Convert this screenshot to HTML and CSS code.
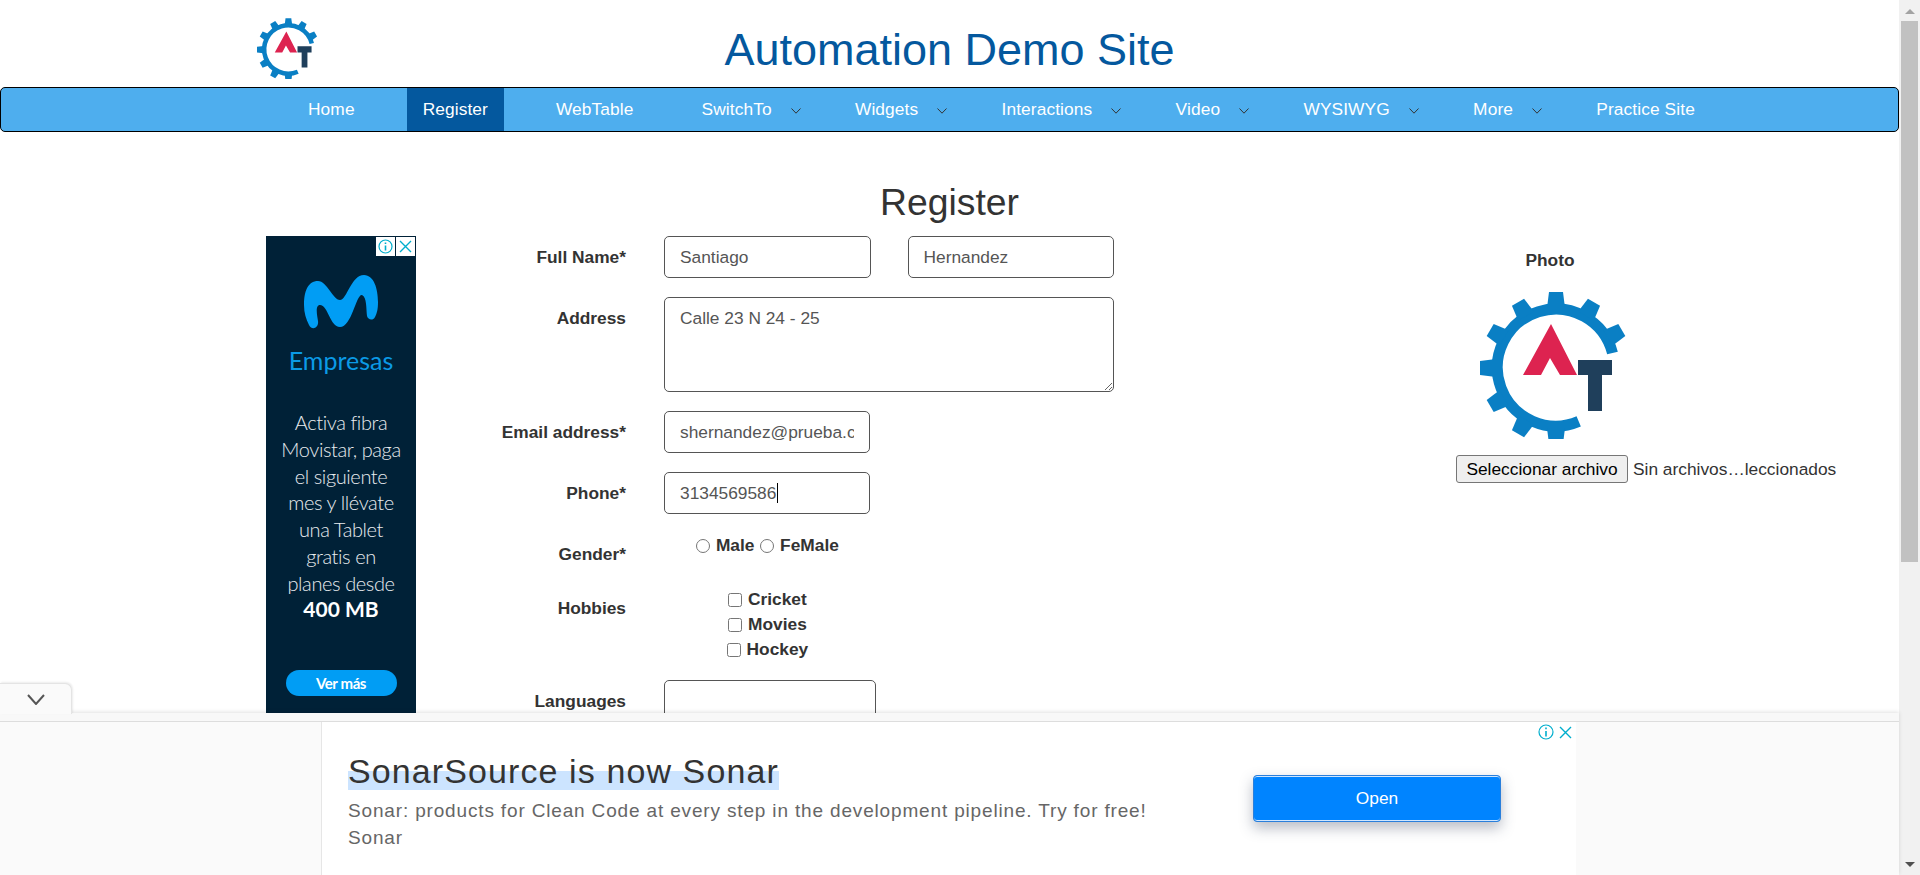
FILE: index.html
```html
<!DOCTYPE html>
<html lang="es">
<head>
    <meta charset="UTF-8">
    <meta name="viewport" content="width=device-width, initial-scale=1.0">
    <title>Register</title>
    <link rel="stylesheet" href="styles.css">
</head>
<body>
    <svg class="defs" width="0" height="0">
        <symbol id="at-logo" viewBox="20 8 150 150">
            <g fill="#0a7fc4" transform="translate(96 87)">
                <path d="M22.7 53.4A58.5 58.5 0 1 1 56.5 -15" fill="none" stroke="#0a7fc4" stroke-width="11"/>
                <polygon points="-9,-60 -7,-76 7,-76 9,-60" transform="rotate(180)"/>
                <polygon points="-9,-60 -7,-76 7,-76 9,-60" transform="rotate(210)"/>
                <polygon points="-9,-60 -7,-76 7,-76 9,-60" transform="rotate(240)"/>
                <polygon points="-9,-60 -7,-76 7,-76 9,-60" transform="rotate(270)"/>
                <polygon points="-9,-60 -7,-76 7,-76 9,-60" transform="rotate(300)"/>
                <polygon points="-9,-60 -7,-76 7,-76 9,-60" transform="rotate(330)"/>
                <polygon points="-9,-60 -7,-76 7,-76 9,-60"/>
                <polygon points="-9,-60 -7,-76 7,-76 9,-60" transform="rotate(30)"/>
                <polygon points="-9,-60 -7,-76 7,-76 9,-60" transform="rotate(60)"/>
            </g>
            <polygon fill="#dd2350" points="91,43 117,94 100,94 90,77 81,94 63,94"/>
            <path fill="#1f3f5b" d="M118 79H152V94H142V130H128V94H118Z"/>
        </symbol>
        <symbol id="chev" viewBox="0 0 10 6">
            <path d="M.5 .5L5 5.2L9.5 .5" fill="none" stroke="#333" stroke-width="1"/>
        </symbol>
    </svg>

    <div class="page">
        <header class="top">
            <svg class="top-logo"><use href="#at-logo"/></svg>
            <h1 class="site-title">Automation Demo Site</h1>
        </header>

        <nav class="menu">
            <a class="menu-item">Home</a>
            <a class="menu-item active">Register</a>
            <a class="menu-item">WebTable</a>
            <a class="menu-item drop">SwitchTo<svg class="chev"><use href="#chev"/></svg></a>
            <a class="menu-item drop">Widgets<svg class="chev"><use href="#chev"/></svg></a>
            <a class="menu-item drop">Interactions<svg class="chev"><use href="#chev"/></svg></a>
            <a class="menu-item drop">Video<svg class="chev"><use href="#chev"/></svg></a>
            <a class="menu-item drop">WYSIWYG<svg class="chev"><use href="#chev"/></svg></a>
            <a class="menu-item drop">More<svg class="chev"><use href="#chev"/></svg></a>
            <a class="menu-item">Practice Site</a>
        </nav>

        <h2 class="page-title">Register</h2>

        <div class="content">
            <aside class="side-ad">
                <div class="ad-marks">
                    <span class="ad-mark">
                        <svg width="15" height="15" viewBox="0 0 15 15"><circle cx="7.5" cy="7.5" r="6.5" fill="none" stroke="#00aecd" stroke-width="1.2"/><path d="M7.5 6.5V11.5M7.5 3.4V5" stroke="#00aecd" stroke-width="1.6"/></svg>
                    </span>
                    <span class="ad-mark">
                        <svg width="13" height="13" viewBox="0 0 13 13"><path d="M1 1L12 12M12 1L1 12" stroke="#00aecd" stroke-width="1.4"/></svg>
                    </span>
                </div>
                <svg class="m-logo" width="74" height="55" viewBox="0 0 74 55">
                    <path d="M0 30C0 16 4 6 14 6C23 6 29 25 36 25C43 25 47 0 60 0C70 0 74 14 74 27C74 34 73 38 71 42C69 46 64 45 63 41C62 34 63 22 58 20C52 19 48 52 36 52C26 52 24 30 16 30C11 30 13 40 14 46C15 53 8 56 5 50C2 44 0 38 0 30Z" fill="#019df4"/>
                </svg>
                <div class="ad-brand">Empresas</div>
                <p class="ad-copy">Activa fibra<br>Movistar, paga<br>el siguiente<br>mes y llévate<br>una Tablet<br>gratis en<br>planes desde<br><b>400 MB</b></p>
                <span class="ad-cta">Ver más</span>
            </aside>

            <form class="reg-form">
                <div class="row">
                    <label class="lbl">Full Name*</label>
                    <div class="two">
                        <input class="field" type="text" value="Santiago">
                        <input class="field" type="text" value="Hernandez">
                    </div>
                </div>
                <div class="row">
                    <label class="lbl">Address</label>
                    <textarea class="field area">Calle 23 N 24 - 25</textarea>
                </div>
                <div class="row">
                    <label class="lbl">Email address*</label>
                    <input class="field" type="email" value="shernandez@prueba.com">
                </div>
                <div class="row">
                    <label class="lbl">Phone*</label>
                    <div class="caret-wrap">
                        <input class="field" type="tel" value="3134569586">
                        <span class="caret"></span>
                    </div>
                </div>
                <div class="row row-gender">
                    <label class="lbl">Gender*</label>
                    <div class="opts">
                        <label class="opt"><input type="radio" name="gender"> Male</label>
                        <label class="opt"><input type="radio" name="gender"> FeMale</label>
                    </div>
                </div>
                <div class="row row-hobbies">
                    <label class="lbl">Hobbies</label>
                    <div class="opts">
                        <div class="hobby"><label class="opt"><input type="checkbox"> Cricket</label></div>
                        <div class="hobby"><label class="opt"><input type="checkbox"> Movies</label></div>
                        <div class="hobby"><label class="opt"><input type="checkbox"> Hockey</label></div>
                    </div>
                </div>
                <div class="row">
                    <label class="lbl">Languages</label>
                    <div class="field langs"></div>
                </div>
            </form>

            <div class="photo">
                <div class="photo-lbl">Photo</div>
                <svg class="photo-logo"><use href="#at-logo"/></svg>
                <div class="file-row">
                    <button type="button" class="file-btn">Seleccionar archivo</button>
                    <span class="file-name">Sin archivos…leccionados</span>
                </div>
            </div>
        </div>
    </div>

    <div class="scrollbar">
        <span class="arrow-up"></span>
        <div class="thumb"></div>
        <span class="arrow-down"></span>
    </div>

    <!-- sticky ad over the bottom of the page -->
    <div class="bottom-ad">
        <div class="toggle">
            <svg width="18" height="11" viewBox="0 0 18 11"><path d="M1 1L9 10L17 1" fill="none" stroke="#555" stroke-width="2"/></svg>
        </div>
        <div class="band"></div>
        <div class="ad-wrap">
            <div class="ad-box">
                <div class="ad-text">
                    <div class="ad-head"><span>SonarSource is now Sonar</span></div>
                    <div class="ad-sub">Sonar: products for Clean Code at every step in the development pipeline. Try for free!<br>Sonar</div>
                </div>
                <span class="ad-open">Open</span>
                <div class="ad-icons">
                    <svg width="16" height="16" viewBox="0 0 16 16"><circle cx="8" cy="8" r="7" fill="none" stroke="#00aecd" stroke-width="1.2"/><path d="M8 7V12.5M8 3.5V5.2" stroke="#00aecd" stroke-width="1.6"/></svg>
                    <svg width="13" height="13" viewBox="0 0 13 13"><path d="M1 1L12 12M12 1L1 12" stroke="#00aecd" stroke-width="1.4"/></svg>
                </div>
            </div>
        </div>
    </div>
</body>
</html>
```

FILE: styles.css
```css
html, body {
    margin: 0;
    height: 875px;
    overflow: hidden;
}
body {
    display: flex;
    font-family: "Liberation Sans", Arial, sans-serif;
    font-size: 17.33px;
    color: #333;
    background-color: #fff;
}
.defs {
    position: absolute;
}
.page {
    width: 1899px;
    height: 875px;
    flex: none;
    overflow: hidden;
}

/* header */
.top {
    display: grid;
    grid-template-columns: 1fr auto 1fr;
    height: 87px;
}
.top-logo {
    width: 62px;
    height: 62px;
    margin: 17px 0 0 257px;
}
.site-title {
    grid-column: 2;
    margin: 0;
    padding-top: 24px;
    font-size: 45px;
    font-weight: normal;
    line-height: 52px;
    color: #04589e;
}

/* nav */
.menu {
    display: flex;
    gap: 36px;
    height: 43px;
    padding-left: 291px;
    border: 1px solid #000;
    border-radius: 5px;
    background-color: #4eaeee;
}
.menu-item {
    display: flex;
    align-items: center;
    padding: 0 16px;
    letter-spacing: 0.1px;
    color: #fff;
}
.menu-item.active {
    background-color: #04589e;
}
.menu-item.drop {
    padding-right: 2.3px;
}
.chev {
    width: 10px;
    height: 6px;
    margin: 2px 0 0 19px;
}

.page-title {
    margin: 0;
    padding: 48px 0 12px;
    font-size: 37.33px;
    font-weight: normal;
    line-height: 44px;
    text-align: center;
    color: #333;
}

/* three columns */
.content {
    display: flex;
    padding-left: 266px;
}
.side-ad {
    position: relative;
    width: 150px;
    height: 600px;
    flex: none;
    display: flex;
    flex-direction: column;
    align-items: center;
    background-color: #002137;
    color: #e8ecef;
    font-family: Lato, sans-serif;
}
.ad-marks {
    position: absolute;
    top: 1px;
    right: 1px;
    display: flex;
    gap: 1px;
}
.ad-mark {
    display: flex;
    align-items: center;
    justify-content: center;
    width: 19px;
    height: 19px;
    background-color: #fff;
}
.m-logo {
    margin-top: 39px;
}
.ad-brand {
    margin-top: 14px;
    font-size: 25px;
    line-height: 32px;
    color: #0b9ae6;
}
.ad-copy {
    margin: 33px 0 0;
    font-size: 20px;
    font-weight: 300;
    line-height: 26.75px;
    letter-spacing: -0.4px;
    text-align: center;
}
.ad-copy b {
    font-size: 21px;
    font-weight: 700;
    color: #fff;
    letter-spacing: 0;
}
.ad-cta {
    width: 111px;
    height: 26px;
    margin-top: 47px;
    border-radius: 13px;
    background-color: #019df4;
    color: #fff;
    font-size: 15px;
    font-weight: 700;
    line-height: 26px;
    letter-spacing: -0.4px;
    text-align: center;
}

/* form */
.reg-form {
    width: 698px;
    flex: none;
}
.row {
    display: flex;
    margin-bottom: 19px;
}
.lbl {
    width: 210px;
    flex: none;
    margin-right: 38px;
    padding-top: 9px;
    font-weight: bold;
    line-height: 24px;
    text-align: right;
}
.two {
    display: flex;
    gap: 37px;
    width: 450px;
}
.two .field {
    flex: 1;
    min-width: 0;
}
.field {
    box-sizing: border-box;
    width: 206px;
    height: 42px;
    padding: 0 15px;
    border: 1px solid #555;
    border-radius: 5px;
    background-color: #fff;
    font-family: "Liberation Sans", Arial, sans-serif;
    font-size: 17.33px;
    color: #555;
}
.area {
    display: block;
    width: 450px;
    height: 95px;
    padding: 8px 15px;
    line-height: 24px;
}
.caret-wrap {
    position: relative;
}
.caret {
    position: absolute;
    top: 11px;
    left: 113px;
    width: 1px;
    height: 20px;
    background-color: #000;
}
.opts {
    width: 206px;
    text-align: center;
    font-weight: bold;
}
.row-gender {
    height: 35px;
}
.row-gender .opts {
    padding-top: 1px;
    line-height: 22px;
}
.row-hobbies {
    height: 74px;
    margin-bottom: 19px;
}
.row-hobbies .opts {
    padding-top: 2px;
}
.hobby {
    height: 25px;
    line-height: 21px;
}
.opt input {
    width: 14px;
    height: 14px;
    margin: 0 1px;
    vertical-align: -2px;
}
.langs {
    width: 212px;
    height: 100px;
}

/* photo column */
.photo {
    width: 188px;
    margin-left: 342px;
    padding-top: 13px;
    text-align: center;
}
.photo-lbl {
    font-weight: bold;
    line-height: 22px;
}
.photo-logo {
    display: block;
    width: 150px;
    height: 150px;
    margin: 18px 0 0 24px;
}
.file-row {
    display: flex;
    align-items: center;
    gap: 5px;
    margin-top: 16px;
    white-space: nowrap;
}
.file-btn {
    flex: none;
    width: 172px;
    height: 28px;
    padding: 0;
    border: 1px solid #767676;
    border-radius: 3px;
    background-color: #efefef;
    font-family: "Liberation Sans", Arial, sans-serif;
    font-size: 17.33px;
    color: #000;
}

/* fake browser scrollbar */
.scrollbar {
    position: relative;
    width: 21px;
    flex: none;
    background-color: #f1f1f1;
}
.thumb {
    position: absolute;
    top: 21px;
    left: 2px;
    right: 2px;
    height: 541px;
    background-color: #c1c1c1;
}
.arrow-up, .arrow-down {
    position: absolute;
    left: 6px;
    border-left: 5px solid transparent;
    border-right: 5px solid transparent;
}
.arrow-up {
    top: 9px;
    border-bottom: 5px solid #a3a3a3;
}
.arrow-down {
    bottom: 8px;
    border-top: 5px solid #505050;
}

/* bottom ad */
.bottom-ad {
    position: fixed;
    left: 0;
    bottom: 0;
    width: 1899px;
    height: 162px;
    display: flex;
    flex-direction: column;
    box-shadow: 0 -1px 4px rgba(0,0,0,0.12);
}
.toggle {
    position: absolute;
    top: -30px;
    left: 0;
    display: flex;
    align-items: center;
    justify-content: center;
    width: 71px;
    height: 30px;
    border: 1px solid #e4e4e4;
    border-width: 1px 1px 0 0;
    border-radius: 0 7px 0 0;
    box-shadow: 1px -1px 2px rgba(0,0,0,0.08);
    background-color: #fafafa;
}
.band {
    height: 8px;
    flex: none;
    background-color: #f8f8f8;
    border-bottom: 1px solid #ddd;
}
.ad-wrap {
    flex: 1;
    display: flex;
    justify-content: center;
    padding-right: 2px;
    background-color: #fafafa;
}
.ad-box {
    position: relative;
    box-sizing: border-box;
    width: 1255px;
    display: flex;
    align-items: center;
    padding: 0 75px 0 26px;
    border-left: 1px solid #e6e6e6;
    background-color: #fff;
}
.ad-text {
    flex: 1;
    align-self: flex-start;
    padding-top: 30px;
}
.ad-head {
    font-size: 34px;
    line-height: 38px;
    letter-spacing: 1.1px;
    color: #333;
}
.ad-head span {
    display: inline-block;
    background: linear-gradient(transparent 19px, #cce4ff 19px);
}
.ad-sub {
    margin-top: 7px;
    font-size: 19px;
    line-height: 27px;
    letter-spacing: 0.84px;
    color: #666;
}
.ad-open {
    box-sizing: border-box;
    width: 248px;
    height: 47px;
    flex: none;
    border: 1px solid #2a7fdb;
    border-radius: 4px;
    background-color: #0084ff;
    box-shadow: inset 0 1px 0 #cfe6ff, inset 0 -1px 0 #cfe6ff, 0 6px 14px rgba(50,60,90,0.35);
    color: #fff;
    font-size: 17.33px;
    line-height: 44px;
    text-align: center;
}
.ad-icons {
    position: absolute;
    top: 2px;
    right: 4px;
    display: flex;
    align-items: center;
    gap: 5px;
}
```
